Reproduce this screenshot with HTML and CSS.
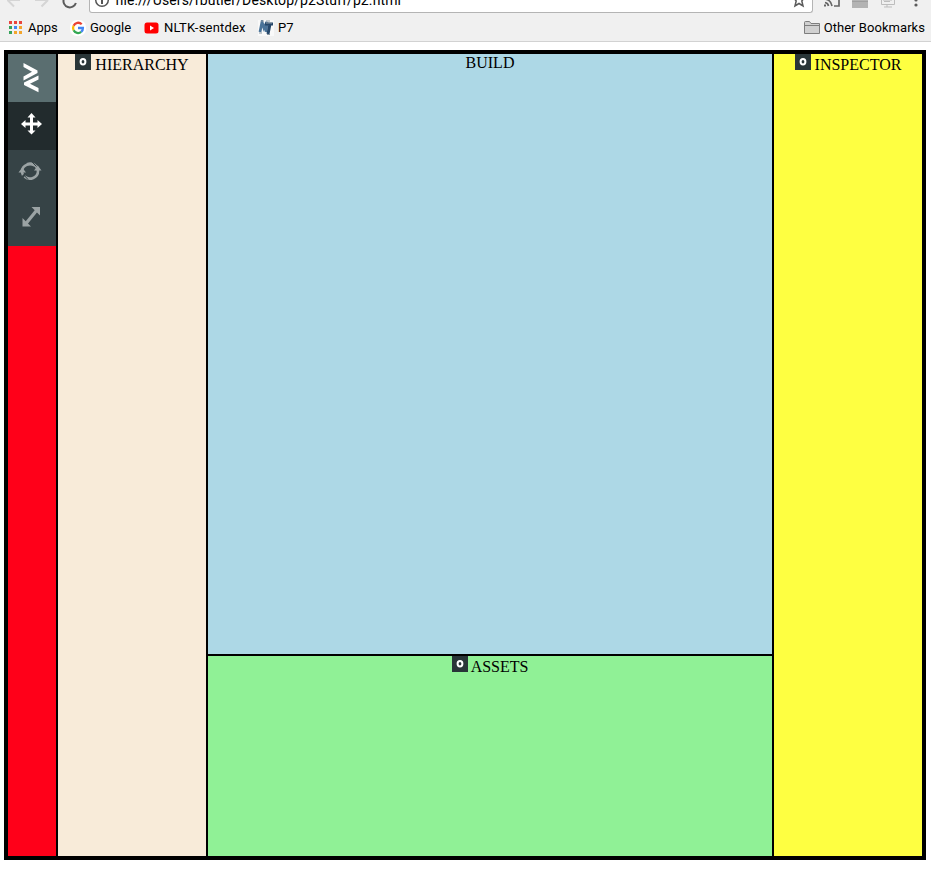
FILE: index.html
```html
<!DOCTYPE html>
<html lang="en">
<head>
<meta charset="utf-8">
<title>p2.html</title>
<link rel="stylesheet" href="styles.css">
</head>
<body>
<header class="browser">
  <div class="nav">
    <svg class="nav-left" width="89" height="13" viewBox="0 0 89 13" fill="none">
      <path d="M7 0H20M14 6.500L7.500 0M35 0H48M41.500 6.500L48 0" stroke="#d5d5d5" stroke-width="2"/>
      <path d="M63.800 -1A6.300 6.300 0 0 0 75.900 3" stroke="#5b5b5b" stroke-width="2"/>
    </svg>
    <div class="address">
      <svg class="info" width="16" height="12" viewBox="0 0 16 12" fill="none" stroke="#555">
        <circle cx="8" cy="0" r="6.300" stroke-width="1.500"/><path d="M8 -1V4" stroke-width="2"/>
      </svg>
      <span class="url">file:///Users/rbutler/Desktop/p2Stuff/p2.html</span>
      <svg class="star" width="14" height="12" viewBox="0 0 14 12" fill="none" stroke="#5b5b5b" stroke-width="1.500">
        <path d="M1 -3L4.200 1L3 6L7 3.500L11 6L9.800 1L13 -3"/>
      </svg>
    </div>
    <svg class="nav-right" width="118" height="13" viewBox="813 0 118 13" fill="none">
      <path d="M825 -1Q831 0 832 6M825 2.500Q828 3 828.500 6M834 6H839V0" stroke="#666" stroke-width="1.700"/><rect x="824" y="4.500" width="2" height="2" fill="#666"/>
      <rect x="852" y="0" width="16" height="8" fill="#b3b3b3"/><path d="M852 1.500H868" stroke="#a0a0a0"/>
      <path d="M881.500 0V4.500H894.500V0M884 1.500H890M887 5V7M884 7H892" stroke="#bdbdbd"/><path d="M883 .5H892" stroke="#d5d5d5"/>
      <circle cx="916" cy="0" r="1.600" fill="#5b5b5b"/><circle cx="916" cy="5" r="1.600" fill="#5b5b5b"/>
    </svg>
  </div>
  <nav class="bookmarks">
    <a class="mark apps">
      <svg width="13" height="13" viewBox="0 0 13 13">
        <path fill="#e8453c" d="M0 0h3v3H0zM5 0h3v3H5zM10 0h3v3h-3z"/>
        <path fill="#34a35a" d="M0 5h3v3H0zM0 10h3v3H0z"/><path fill="#4285f4" d="M5 5h3v3H5z"/>
        <path fill="#f3a52c" d="M10 5h3v3h-3zM5 10h3v3H5zM10 10h3v3h-3z"/>
      </svg><span>Apps</span>
    </a>
    <a class="mark google">
      <svg width="16" height="16" viewBox="0 0 16 16" fill="none">
        <rect width="16" height="16" rx="7" fill="#fff"/>
        <g stroke-width="2.300"><path d="M11.700 4.200A5 5 0 0 0 3.600 5.700" stroke="#ea4335"/><path d="M3.600 5.700A5 5 0 0 0 3.600 10.300" stroke="#fbbc05"/><path d="M3.600 10.300A5 5 0 0 0 11.200 11.900" stroke="#34a853"/><path d="M11.200 11.900A5 5 0 0 0 12.900 8H8" stroke="#4285f4"/></g>
      </svg><span>Google</span>
    </a>
    <a class="mark nltk">
      <svg width="15" height="16" viewBox="0 0 15 16"><rect x=".5" y="2.500" width="14" height="11" rx="2.500" fill="#f00"/><path d="M6 5.500L10 8L6 10.500z" fill="#fff"/></svg><span>NLTK-sentdex</span>
    </a>
    <a class="mark p7">
      <svg width="16" height="16" viewBox="0 0 16 16" fill="none">
        <path fill="#f9f9f9" d="M0 0h16v16H0z"/>
        <path d="M2 12L4 2L6 8L9 2L8 12" stroke="#4a7399" stroke-width="2.800"/>
        <path d="M7 4H15M12 4L10 14" stroke="#25476b" stroke-width="3"/>
        <path d="M3 1H6M8 1H12M8 3H14M1 13H4M9 14.500H12" stroke="#8a98a3"/>
      </svg><span>P7</span>
    </a>
    <a class="mark other">
      <svg width="16" height="13" viewBox="0 0 16 13" fill="#d0d0d0" stroke="#7d7d7d"><path d="M.5 12.500V1.500Q.5.500 1.500.5H5.500L7 2.500H15.500V12.500z"/><path d="M1 4.500H15" fill="none"/></svg><span>Other Bookmarks</span>
    </a>
  </nav>
</header>
<main class="editor">
  <aside class="tools">
    <div class="tool logo">
      <svg width="48" height="48" viewBox="0 0 48 48" fill="#fff"><path d="M15.500 9L29.500 16.500V19L15.500 26.500V22.500L24 17.800L15.500 13zM30.500 21.500V25.500L22 29.800L30.500 34V38.200L16 31V28.500z"/></svg>
    </div>
    <div class="tool active">
      <svg width="48" height="48" viewBox="0 0 48 48" fill="#fff"><path d="M23.500 11L27.500 15.500H25V20.500H29.500V18L34 22L29.500 26V23.500H25V28.500H27.500L23.500 32.500L19.500 28.500H22V23.500H17.500V26L13 22L17.500 18V20.500H22V15.500H19.500z"/></svg>
    </div>
    <div class="tool">
      <svg width="48" height="48" viewBox="0 0 48 48"><path d="M14 21A8 7.500 0 0 1 26.500 15.500M30 21A8 7.500 0 0 1 16.500 26.500M19 14.200A8 7.500 0 0 1 30 21M14 21A8 7.500 0 0 0 15 25" fill="none" stroke="#9ba3a4" stroke-width="2.600"/><path d="M10.500 22.500H18L14.200 17.500zM26 20.500H33.500L29.800 15.500z" fill="#9ba3a4"/><path d="M24 12L28.500 16.500M15.500 24.500L20 29.500" stroke="#364346" stroke-width="1"/></svg>
    </div>
    <div class="tool">
      <svg width="48" height="48" viewBox="0 0 48 48"><path d="M18 25.500L28.500 12.500" stroke="#9ba3a4" stroke-width="3.200"/><path d="M23.500 9H32V17.500zM14.500 20V28.500H23z" fill="#9ba3a4"/></svg>
    </div>
  </aside>
  <section class="panel hierarchy"><svg class="gear" width="16" height="16" viewBox="0 0 16 16"><path fill="#293538" d="M0 0h16v16H0z"/><ellipse cx="8" cy="7.800" rx="2.400" ry="2.700" fill="none" stroke="#fff" stroke-width="2"/></svg> HIERARCHY</section>
  <div class="center">
    <section class="panel build">BUILD</section>
    <section class="panel assets"><svg class="gear" width="16" height="16" viewBox="0 0 16 16"><path fill="#293538" d="M0 0h16v16H0z"/><ellipse cx="8" cy="7.800" rx="2.400" ry="2.700" fill="none" stroke="#fff" stroke-width="2"/></svg> ASSETS</section>
  </div>
  <section class="panel inspector"><svg class="gear" width="16" height="16" viewBox="0 0 16 16"><path fill="#293538" d="M0 0h16v16H0z"/><ellipse cx="8" cy="7.800" rx="2.400" ry="2.700" fill="none" stroke="#fff" stroke-width="2"/></svg> INSPECTOR</section>
</main>
</body>
</html>
```
FILE: styles.css
```css
* { box-sizing: border-box; }
body { margin: 0; background: #fff; overflow: hidden; }
svg { display: block; flex: none; }

.browser {
  height: 42px;
  background: #f0f0f0;
  border-bottom: 1px solid #d2d2d2;
  font-family: Roboto, sans-serif;
  color: #000;
}
.nav { display: flex; height: 13px; overflow: hidden; }
.address {
  display: flex;
  flex: 1;
  height: 13px;
  padding: 0 6px 0 4px;
  background: #fff;
  border: 1px solid #b4b4b4;
  border-top: 0;
  border-radius: 0 0 3px 3px;
}
.url {
  margin: -8px 0 0 5px;
  font-size: 14px;
  line-height: 16px;
  letter-spacing: 0.12px;
  white-space: nowrap;
}
.star { margin-left: auto; }

.bookmarks {
  display: flex;
  align-items: center;
  height: 28px;
  padding: 1px 6px 0 9px;
  font-size: 13px;
  line-height: 16px;
}
.mark { display: flex; align-items: center; white-space: nowrap; }
.apps { gap: 6px; width: 61px; }
.google { gap: 4px; width: 74px; }
.nltk { gap: 5px; width: 114px; letter-spacing: 0.2px; }
.p7 { gap: 4px; }
.other { gap: 4px; margin-left: auto; letter-spacing: 0.05px; }

.editor {
  display: grid;
  grid-template-columns: 48px 148px 564px 148px;
  gap: 2px;
  width: 922px;
  height: 810px;
  margin: 8px 0 0 4px;
  border: 4px solid #000;
  background: #000;
}
.tools { background: #ff0019; }
.tool { height: 48px; background: #364346; }
.tool.logo { background: #5a6e70; }
.tool.active { background: #222b2d; }
.center { display: grid; grid-template-rows: 600px 200px; gap: 2px; }
.panel {
  font: 16px/18px "Liberation Serif", serif;
  text-align: center;
  color: #000;
}
.gear { display: inline-block; vertical-align: baseline; }
.hierarchy { background: #f8ebd9; }
.build { background: #add8e6; }
.assets { background: #90f196; }
.inspector { background: #feff41; }
```
